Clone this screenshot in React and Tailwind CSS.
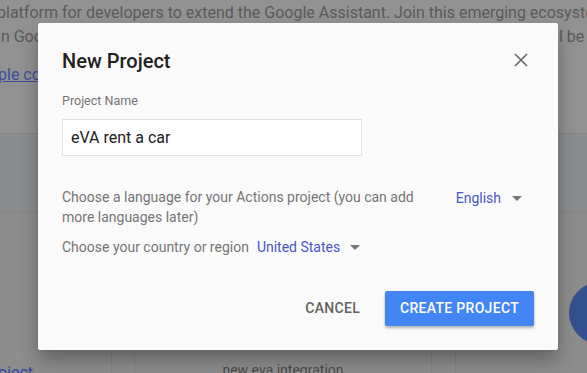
import React from 'react';

const font = { fontFamily: 'Roboto, "Liberation Sans", sans-serif' };

function Caret({ gap }) {
  return (
    <svg width="10" height="5" viewBox="0 0 10 5" className={gap + ' mt-[1px]'}>
      <path d="M0 0h10L5 5z" fill="#757575" />
    </svg>
  );
}

const App = () => {
  return (
    <div className="relative w-[587px] h-[373px] overflow-hidden bg-[#929292]" style={font}>
      {/* dimmed page behind the dialog */}
      <div className="h-[133px] pt-[1px] text-[16px] leading-[24px] text-[#5a5a5a] whitespace-nowrap">
        <p className="-ml-[3px]">platform for developers to extend the Google Assistant. Join this emerging ecosystem</p>
        <div className="flex -ml-[3px]">
          <span className="w-[562px] shrink-0 overflow-hidden">in Google Assistant and reach millions of users. Your actions wi</span>
          <span className="shrink-0">l be available</span>
        </div>
        <p className="mt-[14px] -ml-[2px] text-[#3a4f9e] underline">ple code</p>
      </div>
      <div className="h-[80px] border-t border-[#858585] border-b bg-[#8a8c8e]" />
      <div className="flex h-[160px] bg-[#8d8d8d]">
        <div className="w-[112px] border-r border-[#828282]" />
        <div className="w-[23px] border-r border-[#828282]" />
        <div className="w-[297px] border-r border-[#828282] flex items-end justify-center">
          <span className="text-[14px] text-[#4a4a4a] leading-[18px] -mb-[6px]">new eva integration</span>
        </div>
        <div className="w-[24px] border-r border-[#828282]" />
        <div className="flex-1 relative">
          <div className="absolute left-[113px] top-[69px] w-[62px] h-[62px] rounded-full bg-[#34508f]" />
        </div>
      </div>
      <span className="absolute left-[-2px] top-[361px] text-[16px] text-[#33499a]">oject</span>

      {/* dialog */}
      <div className="absolute left-[38px] top-[23px] w-[520px] h-[327px] bg-[#fafafa] rounded-[2px] shadow-[0_10px_18px_rgba(0,0,0,0.3)] px-[24px] pt-[24px]">
        <div className="flex items-start justify-between">
          <h2 className="text-[20px] leading-[28px] font-medium text-[#212121]">New Project</h2>
          <svg width="14" height="14" viewBox="0 0 14 14" className="mt-[6px] mr-[6px]">
            <path d="M1 1l12 12M13 1L1 13" stroke="#666" strokeWidth="1.6" />
          </svg>
        </div>
        <div className="mt-[18px] text-[12.5px] leading-[16px] text-[#757575]">Project Name</div>
        <div className="mt-[10px] w-[300px] h-[37px] border border-[#e0e0e0] bg-white flex items-center pl-[8px] text-[16px] text-[#212121]">
          eVA rent a car
        </div>
        <div className="mt-[31px] flex items-start justify-between text-[14px] leading-[20px] text-[#757575]">
          <p className="w-[360px]">Choose a language for your Actions project (you can add more languages later)</p>
          <div className="flex items-center mr-[12px] mt-[1px]">
            <span className="text-[#4a55c8]">English</span>
            <Caret gap="ml-[11px]" />
          </div>
        </div>
        <div className="mt-[10px] flex items-center text-[14px] leading-[20px] text-[#757575]">
          <span>Choose your country or region</span>
          <span className="ml-[8px] text-[#4a55c8]">United States</span>
          <Caret gap="ml-[10px]" />
        </div>
        <div className="mt-[34px] flex items-center justify-end">
          <button className="mr-[25px] text-[14px] font-medium text-[#616161] tracking-[0.3px]">CANCEL</button>
          <button className="w-[149px] h-[35px] rounded-[2px] bg-[#4285f4] text-white text-[14px] font-medium tracking-[0.3px] shadow-[0_2px_3px_rgba(0,0,0,0.3)]">
            CREATE PROJECT
          </button>
        </div>
      </div>
    </div>
  );
};

export default App;
